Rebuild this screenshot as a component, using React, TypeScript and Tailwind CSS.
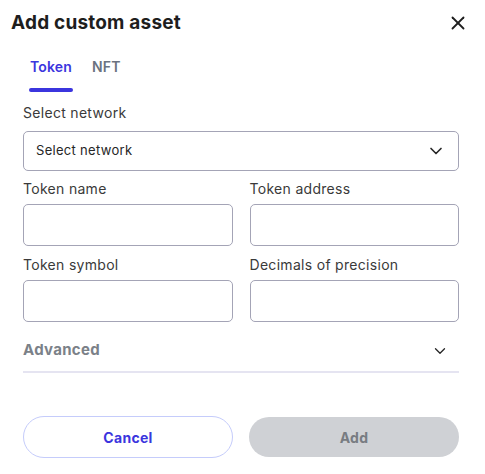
import { X, ChevronDown } from "lucide-react";

const font = { fontFamily: "Inter, 'Open Sans', sans-serif" };

function Field({ label }: { label: string }) {
  return (
    <div className="flex flex-col">
      <label className="h-[22px] text-[14px] leading-[22px] tracking-[0.3px] text-[#3a3a3a]">{label}</label>
      <div className="mt-[4px] h-[42px] rounded-[5px] border border-[#a4a4b6] bg-white" />
    </div>
  );
}

export default function App() {
  return (
    <div className="h-[474px] w-[485px] bg-white" style={font}>
      <div className="flex h-[44px] items-center justify-between pl-[11px] pr-[16px] pt-[2px]">
        <h1 className="text-[19px] font-bold tracking-[0.2px] text-[#1e1e1e]">Add custom asset</h1>
        <X className="h-[22px] w-[22px] text-[#1e1e1e]" strokeWidth={2} />
      </div>

      <div className="flex gap-[19px] pl-[29px] pt-[12px]">
        <div className="flex flex-col items-center">
          <span className="text-[14px] font-semibold leading-[22px] tracking-[0.2px] text-[#3b35de]">Token</span>
          <span className="mt-[10px] h-[4px] w-[44px] rounded-full bg-[#3b35de]" />
        </div>
        <span className="text-[14px] font-semibold leading-[22px] tracking-[0.2px] text-[#6b7280]">NFT</span>
      </div>

      <div className="pl-[23px] pr-[26px] pt-[10px]">
        <label className="block h-[22px] text-[14px] leading-[22px] tracking-[0.3px] text-[#3a3a3a]">Select network</label>
        <div className="mt-[7px] flex h-[40px] items-center justify-between rounded-[5px] border border-[#a4a4b6] pl-[12px] pr-[12px]">
          <span className="text-[13px] tracking-[0.3px] text-[#262626]">Select network</span>
          <ChevronDown className="h-[20px] w-[20px] text-[#262626]" strokeWidth={2} />
        </div>

        <div className="mt-[7px] grid grid-cols-2 gap-x-[17px] gap-y-[8px]">
          <Field label="Token name" />
          <Field label="Token address" />
          <Field label="Token symbol" />
          <Field label="Decimals of precision" />
        </div>

        <div className="mt-[18px] flex items-end justify-between border-b-2 border-[#e5e4f1] pb-[11px]">
          <span className="text-[15px] font-bold leading-[20px] tracking-[0.3px] text-[#7b8188]">Advanced</span>
          <ChevronDown className="mr-[10px] h-[18px] w-[18px] text-[#262626]" strokeWidth={1.75} />
        </div>

        <div className="mt-[43px] grid grid-cols-2 gap-x-[16px]">
          <button className="h-[42px] rounded-full border border-[#c5ccfb] bg-white text-[14px] font-bold tracking-[0.3px] text-[#3b35de]">
            Cancel
          </button>
          <button className="mt-[1px] h-[40px] rounded-full bg-[#cfd1d5] text-[14px] font-bold tracking-[0.3px] text-[#787c82]">
            Add
          </button>
        </div>
      </div>
    </div>
  );
}
